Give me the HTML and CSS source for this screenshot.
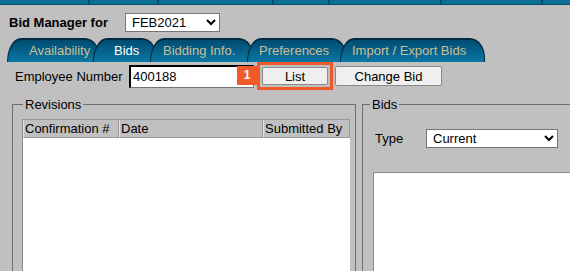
FILE: index.html
```html
<!DOCTYPE html>
<html>
<head>
<meta charset="utf-8">
<link rel="stylesheet" href="styles.css">
</head>
<body>
<div class="topbar">
  <span class="seg"></span><span class="seg"></span><span class="seg"></span><span class="seg"></span><span class="seg"></span><span class="seg"></span><span class="seg"></span>
</div>
<div class="header">
  <span class="title">Bid Manager for</span>
  <select class="sel sel-month"><option>FEB2021</option></select>
</div>
<div class="tabs">
  <div class="tab tab-avail">Availability</div>
  <div class="tab tab-bids active">Bids</div>
  <div class="tab tab-info">Bidding Info.</div>
  <div class="tab tab-pref">Preferences</div>
  <div class="tab tab-imp">Import / Export Bids</div>
</div>
<div class="emp-row">
  <span class="emp-label">Employee Number</span>
  <div class="emp-input-wrap">
    <input class="emp-input" type="text" value="400188">
    <span class="badge">1</span>
  </div>
  <div class="highlight"><button class="btn btn-list">List</button></div>
  <button class="btn btn-change">Change Bid</button>
</div>
<div class="content">
  <fieldset class="fs fs-rev">
    <legend class="lg">Revisions</legend>
    <div class="grid">
      <div class="grid-head">
        <div class="th th-conf">Confirmation #</div>
        <div class="th th-date">Date</div>
        <div class="th th-sub">Submitted By</div>
      </div>
      <div class="grid-body"></div>
    </div>
  </fieldset>
  <fieldset class="fs fs-bids">
    <legend class="lg lg-bids">Bids</legend>
    <div class="type-row">
      <span class="type-label">Type</span>
      <select class="sel sel-type"><option>Current</option></select>
    </div>
    <div class="bids-box"></div>
  </fieldset>
</div>
</body>
</html>
```

FILE: styles.css
```css
* { box-sizing: border-box; }
html, body { margin: 0; padding: 0; }
body {
  width: 570px;
  height: 271px;
  overflow: hidden;
  background: #c0c0c0;
  font-family: "Liberation Sans", Arial, sans-serif;
  font-size: 13px;
  color: #000;
}
.topbar {
  display: grid;
  grid-template-columns: 88px 69px 115px 56px 112px 101px 1fr;
  height: 5px;
  background: #0b6f98;
  border-bottom: 1px solid #07506f;
}
.seg { border-left: 2px solid #084a66; }
.seg:first-child { border-left: none; }

.header {
  display: flex;
  align-items: center;
  height: 19px;
  margin-top: 8px;
  padding-left: 9px;
}
.title { font-weight: bold; font-size: 13px; }
.sel {
  height: 19px;
  border: 1px solid #767676;
  background: #fff;
  font-family: "Liberation Sans", Arial, sans-serif;
  font-size: 13px;
  color: #000;
  padding: 0 0 0 2px;
  border-radius: 0;
}
.sel-month { width: 95px; margin-left: 17px; }

.tabs {
  display: flex;
  height: 24px;
  margin-top: 6px;
  padding-left: 7px;
}
.tab {
  position: relative;
  height: 24px;
  line-height: 22px;
  color: #cdbf95;
  font-size: 13px;
  background: linear-gradient(to bottom, #004c70 0%, #055f88 45%, #0a78a4 100%);
  border: 1px solid #002b40;
  border-top-width: 2px;
  border-bottom: none;
  border-radius: 14px 15px 0 0 / 24px 20px 0 0;
  margin-left: -7px;
  white-space: nowrap;
  flex-shrink: 0;
}
.tab:first-child { margin-left: 0; }
.tab.active { color: #fff; }
.tab-avail { width: 93px; padding-left: 21px; }
.tab-bids { width: 64px; padding-left: 20px; }
.tab-info { width: 104px; padding-left: 12px; }
.tab-pref { width: 100px; padding-left: 11px; }
.tab-imp { width: 145px; padding-left: 11px; }

.emp-row {
  display: flex;
  align-items: center;
  height: 28px;
  padding-left: 15px;
}
.emp-label { width: 114px; }
.emp-input-wrap { position: relative; }
.emp-input {
  display: block;
  width: 125px;
  height: 23px;
  border: 1px solid #767676;
  border-top: 2px solid #000;
  border-left: 2px solid #000;
  background: #fff;
  font-family: "Liberation Sans", Arial, sans-serif;
  font-size: 13px;
  padding: 0 2px;
  margin: 0;
}
.badge {
  position: absolute;
  left: 108px;
  top: 1px;
  width: 20px;
  height: 19px;
  background: #f05a28;
  color: #fff;
  font-weight: bold;
  font-size: 12px;
  line-height: 19px;
  text-align: center;
}
.highlight {
  margin-left: 3px;
  width: 76px;
  height: 28px;
  border: 3px solid #f05a28;
  padding: 2px;
}
.btn {
  height: 20px;
  background: #efefef;
  border: 1px solid #8a8a8a;
  border-radius: 2px;
  font-family: "Liberation Sans", Arial, sans-serif;
  font-size: 13px;
  color: #000;
  padding: 0;
}
.btn-list { width: 66px; height: 18px; display: block; }
.btn-change { width: 107px; margin-left: 2px; }

.content {
  display: flex;
  align-items: flex-start;
  margin-top: 7px;
}
.fs {
  margin: 0;
  border: 1px solid #6e6e6e;
  border-bottom: none;
  padding: 0 0 0 9px;
  height: 174px;
  min-width: 0;
  flex-shrink: 0;
  overflow: hidden;
}
.fs-rev { margin-left: 12px; width: 344px; }
.fs-bids {
  margin-left: 6px;
  width: 208px;
  padding-left: 10px;
  border-right: none;
}
.lg {
  padding: 0 2px;
  margin-left: 1px;
  line-height: 15px;
  font-size: 13px;
}
.lg-bids { margin-left: -3px; }

.grid {
  margin-top: 7px;
  width: 328px;
  border-left: 1px solid #8a8a8a;
}
.grid-head {
  display: grid;
  grid-template-columns: 96px 144px 1fr;
  height: 19px;
  border-top: 1px solid #9a9a9a;
}
.th {
  background: #c0c0c0;
  border-right: 1px solid #9a9a9a;
  border-bottom: 1px solid #9a9a9a;
  border-left: 1px solid #e0e0e0;
  padding-left: 1px;
  line-height: 17px;
  white-space: nowrap;
  overflow: hidden;
}
.grid-body {
  height: 140px;
  background: #fff;
}

.type-row {
  display: flex;
  align-items: center;
  margin-top: 17px;
  padding-left: 2px;
}
.type-label { width: 51px; }
.sel-type { width: 132px; height: 19px; }
.bids-box {
  margin-top: 24px;
  height: 110px;
  background: #fff;
  border-top: 1px solid #8a8a8a;
  border-left: 1px solid #8a8a8a;
}
```
